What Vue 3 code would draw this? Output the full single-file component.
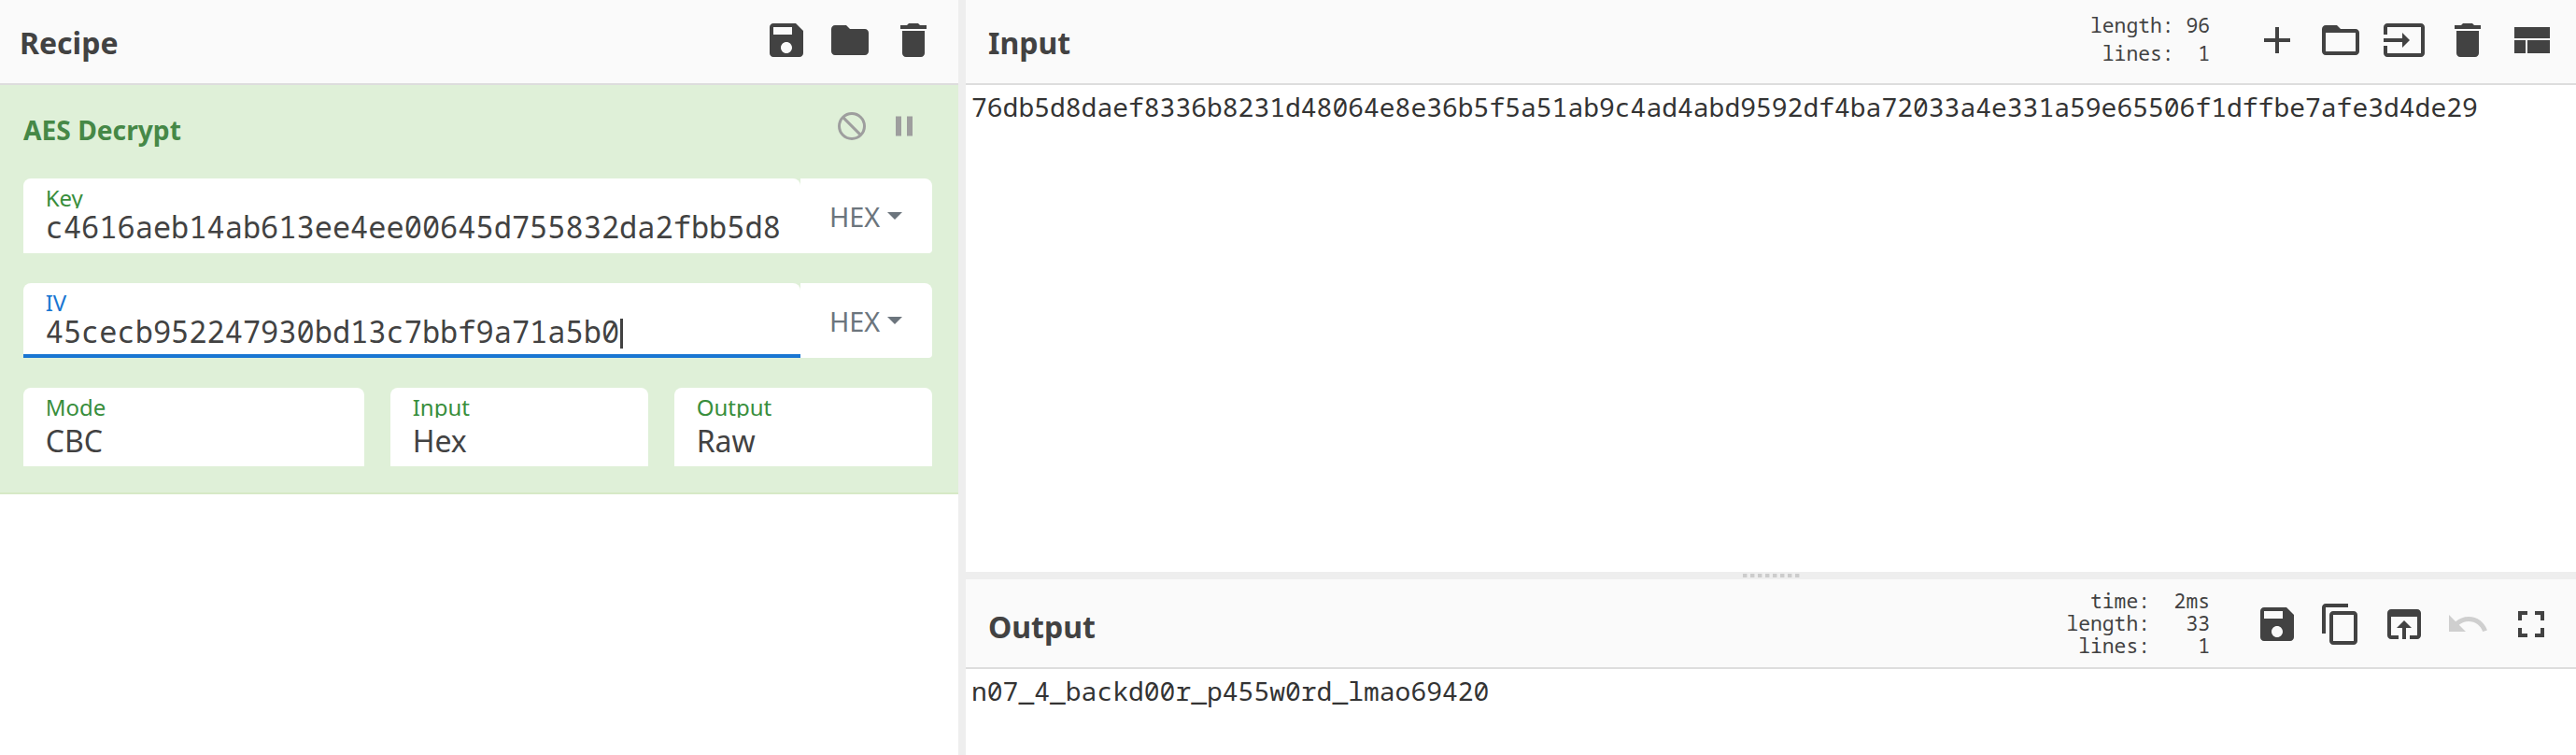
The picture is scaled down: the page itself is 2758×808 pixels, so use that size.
<script setup>
import { ref } from 'vue'

const icons = {
  save: 'M17 3H5c-1.11 0-2 .9-2 2v14c0 1.1.89 2 2 2h14c1.1 0 2-.9 2-2V7l-4-4zm-5 16c-1.66 0-3-1.34-3-3s1.34-3 3-3 3 1.34 3 3-1.34 3-3 3zm3-10H5V5h10v4z',
  folder: 'M10 4H4c-1.1 0-1.99.9-1.99 2L2 18c0 1.1.9 2 2 2h16c1.1 0 2-.9 2-2V8c0-1.1-.9-2-2-2h-8l-2-2z',
  trash: 'M6 19c0 1.1.9 2 2 2h8c1.1 0 2-.9 2-2V7H6v12zM19 4h-3.5l-1-1h-5l-1 1H5v2h14V4z',
  add: 'M19 13h-6v6h-2v-6H5v-2h6V5h2v6h6v2z',
  folderOpen: 'M20 6h-8l-2-2H4c-1.1 0-1.99.9-1.99 2L2 18c0 1.1.9 2 2 2h16c1.1 0 2-.9 2-2V8c0-1.1-.9-2-2-2zm0 12H4V8h16v10z',
  input: 'M21 3.01H3c-1.1 0-2 .9-2 2V9h2V4.99h18v14.03H3V15H1v4.01c0 1.1.9 1.98 2 1.98h18c1.1 0 2-.88 2-1.98v-14c0-1.11-.9-2-2-2zM11 16l4-4-4-4v3H1v2h10v3z',
  layout: 'M3 19h6v-7H3v7zm7 0h12v-7H10v7zM3 5v6h19V5H3z',
  copy: 'M16 1H4c-1.1 0-2 .9-2 2v14h2V3h12V1zm3 4H8c-1.1 0-2 .9-2 2v14c0 1.1.9 2 2 2h11c1.1 0 2-.9 2-2V7c0-1.1-.9-2-2-2zm0 16H8V7h11v14z',
  openInBrowser: 'M19 4H5c-1.11 0-2 .9-2 2v12c0 1.1.89 2 2 2h4v-2H5V8h14v10h-4v2h4c1.1 0 2-.9 2-2V6c0-1.1-.89-2-2-2zm-7 6l-4 4h3v6h2v-6h3l-4-4z',
  undo: 'M12.5 8c-2.65 0-5.05.99-6.9 2.6L2 7v9h9l-3.62-3.62c1.39-1.16 3.16-1.88 5.12-1.88 3.54 0 6.55 2.31 7.6 5.5l2.37-.78C21.08 11.03 17.15 8 12.5 8z',
  fullscreen: 'M7 14H5v5h5v-2H7v-3zm-2-4h2V7h3V5H5v5zm12 7h-3v2h5v-5h-2v3zM14 5v2h3v3h2V5h-5z',
  pause: 'M6 19h4V5H6v14zm8-14v14h4V5h-4z'
}
const recipeIcons = ['save', 'folder', 'trash']
const inputIcons = ['add', 'folderOpen', 'input', 'trash', 'layout']
const outputIcons = ['save', 'copy', 'openInBrowser', 'undo', 'fullscreen']

const toggles = ref([
  { label: 'Key', value: 'c4616aeb14ab613ee4ee00645d755832da2fbb5d8', focused: false },
  { label: 'IV', value: '45cecb952247930bd13c7bbf9a71a5b0', focused: true }
])
const selects = [
  { label: 'Mode', value: 'CBC' },
  { label: 'Input', value: 'Hex' },
  { label: 'Output', value: 'Raw' }
]
const inputStats = 'length: 96\n lines:  1'
const outputStats = '  time:  2ms\nlength:   33\n lines:    1'
const inputText = '76db5d8daef8336b8231d48064e8e36b5f5a51ab9c4ad4abd9592df4ba72033a4e331a59e65506f1dffbe7afe3d4de29'
const outputText = 'n07_4_backd00r_p455w0rd_lmao69420'
</script>

<template>
  <main class="app">
    <section class="recipe">
      <header class="bar">
        <h2>Recipe</h2>
        <div class="icons">
          <svg v-for="i in recipeIcons" :key="i" viewBox="0 0 24 24"><path :d="icons[i]" /></svg>
        </div>
      </header>
      <article class="operation">
        <div class="op-head">
          <h3>AES Decrypt</h3>
          <div class="op-icons">
            <svg class="ban" viewBox="0 0 24 24"><circle cx="12" cy="12" r="9" /><path d="M5.6 5.6L18.4 18.4" /></svg>
            <svg viewBox="0 0 24 24"><path :d="icons.pause" /></svg>
          </div>
        </div>
        <div v-for="t in toggles" :key="t.label" class="toggle" :class="{ focused: t.focused }">
          <div class="field">
            <label>{{ t.label }}</label>
            <div class="value mono">{{ t.value }}<i v-if="t.focused" class="caret"></i></div>
          </div>
          <div class="kind">HEX<span class="arrow"></span></div>
        </div>
        <div class="selects">
          <div v-for="s in selects" :key="s.label" class="field">
            <label>{{ s.label }}</label>
            <div class="value">{{ s.value }}</div>
          </div>
        </div>
      </article>
    </section>
    <div class="gutter"></div>
    <section class="io">
      <section class="pane input">
        <header class="bar">
          <h2>Input</h2>
          <pre class="stats mono">{{ inputStats }}</pre>
          <div class="icons">
            <svg v-for="i in inputIcons" :key="i" viewBox="0 0 24 24"><path :d="icons[i]" /></svg>
          </div>
        </header>
        <div class="text mono">{{ inputText }}</div>
      </section>
      <div class="gutter horizontal"><span v-for="n in 8" :key="n"></span></div>
      <section class="pane output">
        <header class="bar">
          <h2>Output</h2>
          <pre class="stats mono">{{ outputStats }}</pre>
          <div class="icons">
            <svg v-for="i in outputIcons" :key="i" :class="{ off: i === 'undo' }" viewBox="0 0 24 24"><path :d="icons[i]" /></svg>
          </div>
        </header>
        <div class="text mono">{{ outputText }}</div>
      </section>
    </section>
  </main>
</template>

<style>
body { margin: 0; background: #fff; }
</style>

<style scoped>
* { box-sizing: border-box; }
.app { display: flex; width: 2758px; height: 808px; overflow: hidden; background: #fff; color: #424242; font-family: "Noto Sans", sans-serif; }
.mono { font-family: "Noto Sans Mono", "DejaVu Sans Mono", monospace; }
.recipe { width: 1026px; flex: none; }
.gutter { width: 8px; flex: none; background: #eee; }
.io { flex: 1; min-width: 0; display: flex; flex-direction: column; }
.bar { display: flex; align-items: flex-start; height: 91px; background: #fafafa; border-bottom: 2px solid #ddd; }
h2 { margin: 24px auto 0 21px; font-size: 32px; line-height: 44px; font-weight: 700; }
.io h2 { margin-left: 24px; }
.icons { display: flex; gap: 20px; margin: 19px 24px 0 0; }
.icons svg { display: block; width: 48px; height: 48px; fill: #424242; }
.icons .off { fill: #cfcfcf; }
.stats { margin: 12px 48px 0 0; font-size: 21.33px; line-height: 30px; }
.operation { height: 438px; padding: 0 28px 0 25px; background: #dff0d8; border-bottom: 2px solid #d6e9c6; }
.op-head { display: flex; justify-content: space-between; height: 100px; }
h3 { margin: 28px 0 0; font-size: 28.2px; line-height: 40px; font-weight: 700; color: #468847; }
.op-icons { display: flex; gap: 20px; margin: 26px 12px 0 0; }
.op-icons svg { display: block; width: 36px; height: 36px; fill: #9e9e9e; }
.op-icons .ban { fill: none; stroke: #9e9e9e; stroke-width: 2; }
.toggle { display: flex; height: 80px; margin-bottom: 32px; }
.toggle .field { width: 832px; }
.field { background: #fff; border-radius: 8px 8px 0 0; padding: 9px 20px 0 23.7px; }
label { display: block; height: 23px; overflow: hidden; font-size: 24px; line-height: 23px; color: #388e3c; }
.value { font-size: 32px; line-height: 40px; white-space: nowrap; }
.focused label { color: #1976d2; }
.focused .field { background: linear-gradient(#1976d2, #1976d2) bottom / 100% 4px no-repeat #fff; }
.caret { display: inline-block; width: 3px; height: 32px; margin-left: 0.9px; vertical-align: -6px; background: #424242; }
.kind { flex: 1; display: flex; align-items: center; padding-left: 31px; background: #fff; border-radius: 0 8px 4px 0; color: #6c757d; font-size: 28.8px; }
.arrow { margin-left: 8px; border: 8px solid transparent; border-top-color: #6c757d; border-bottom: 0; }
.selects { display: grid; grid-template-columns: 365px 276px 276px; gap: 28px; }
.selects .field { height: 84px; }
.selects .value { margin-top: 5px; }
.input { height: 612px; }
.horizontal { width: auto; height: 8px; display: flex; justify-content: center; align-items: center; gap: 4px; }
.horizontal span { width: 4px; height: 4px; background: #ccc; box-shadow: 1px 0 #e0e0e0; }
.output .bar { height: 96px; }
.output h2 { margin-top: 29px; }
.output .icons { margin-top: 24px; }
.output .stats { margin-top: 11px; line-height: 24px; }
.text { padding-left: 6px; padding-top: 4px; font-size: 28px; line-height: 38px; color: #333; white-space: nowrap; }
</style>
